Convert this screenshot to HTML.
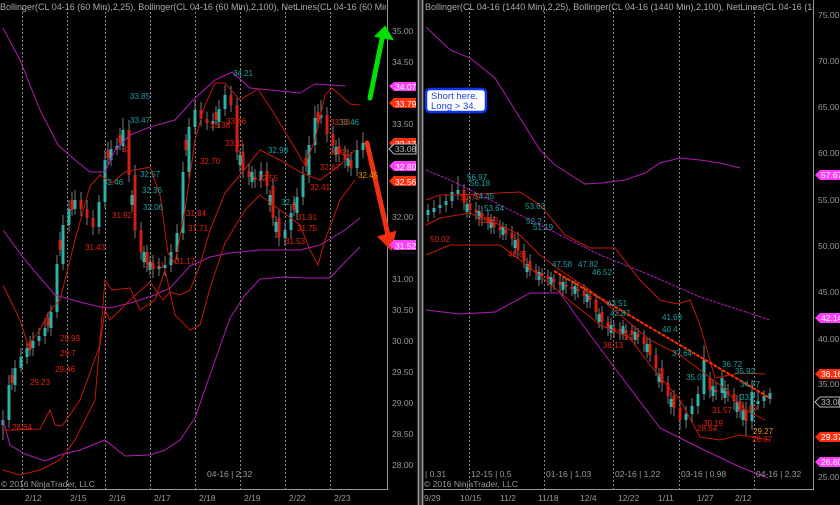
<!DOCTYPE html>
<html><head><meta charset="utf-8"><style>
html,body{margin:0;padding:0;background:#000;width:840px;height:505px;overflow:hidden}
svg{display:block;font-family:"Liberation Sans",sans-serif}
</style></head><body>
<svg width="840" height="505" viewBox="0 0 840 505" xmlns="http://www.w3.org/2000/svg">
<defs><clipPath id="cl"><rect x="0" y="0" width="386" height="20"/></clipPath><clipPath id="cr"><rect x="424" y="0" width="389" height="20"/></clipPath></defs>
<rect width="840" height="505" fill="#000"/>
<rect x="417" y="0" width="7" height="505" fill="#3a3a3a"/>
<line x1="418.5" y1="0" x2="418.5" y2="505" stroke="#9a9a9a"/>
<line x1="422.5" y1="0" x2="422.5" y2="505" stroke="#9a9a9a"/>
<g stroke="#888" stroke-dasharray="2,2" stroke-width="1">
<line x1="22.5" y1="8" x2="22.5" y2="489"/><line x1="67.5" y1="8" x2="67.5" y2="489"/><line x1="105.5" y1="8" x2="105.5" y2="489"/><line x1="150.5" y1="8" x2="150.5" y2="489"/><line x1="195.5" y1="8" x2="195.5" y2="489"/><line x1="240.5" y1="8" x2="240.5" y2="489"/><line x1="285.5" y1="8" x2="285.5" y2="489"/><line x1="330.5" y1="8" x2="330.5" y2="489"/>
<line x1="469.5" y1="8" x2="469.5" y2="489"/><line x1="544.5" y1="8" x2="544.5" y2="489"/><line x1="613.5" y1="8" x2="613.5" y2="489"/><line x1="679.5" y1="8" x2="679.5" y2="489"/><line x1="754.5" y1="8" x2="754.5" y2="489"/>
</g>
<g stroke="#999" fill="none"><path d="M387.5 0V489.5H0"/><path d="M813.5 0V489.5H424"/></g>
<!-- candles -->
<g stroke="#7a7a7a" stroke-width="1" fill="none">
<path d="M3 410V440 M9 375V428 M12 368V390 M15 360V392 M21 348V372 M27 340V364 M30 336V356 M33 332V356 M39 328V346 M45 318V344 M48 312V332 M51 305V336 M57 255V318 M60 232V256 M63 215V270 M69 200V232 M72 192V216 M75 190V215 M81 192V216 M87 200V225 M93 210V235 M99 195V234 M105 150V208 M108 142V165 M111 140V166 M117 138V155 M120 128V150 M123 118V152 M129 120V182 M132 190V212 M135 165V238 M141 222V260 M144 246V268 M147 245V272 M150 256V275 M153 255V278 M159 258V276 M165 256V276 M171 244V272 M177 224V260 M183 162V240 M186 134V156 M189 118V178 M195 100V134 M201 102V126 M207 112V130 M213 113V131 M216 106V125 M219 100V128 M225 85V116 M231 86V112 M237 98V160 M240 150V172 M243 144V178 M249 163V185 M252 166V188 M255 169V188 M261 162V188 M267 162V194 M270 190V212 M273 178V226 M276 216V238 M279 210V246 M285 222V246 M291 205V238 M294 196V216 M297 188V220 M303 166V205 M306 150V172 M309 136V183 M315 106V153 M318 104V128 M321 100V124 M327 107V142 M333 126V154 M336 140V162 M339 138V162 M345 146V168 M348 150V172 M351 152V176 M357 140V176 M363 132V158"/>
<path d="M428 204V222 M434 200V218 M440 196V214 M446 194V212 M452 184V208 M458 176V200 M464 184V210 M467 198V218 M470 196V216 M476 202V220 M479 205V226 M482 206V226 M488 210V230 M491 214V234 M494 216V234 M500 220V238 M503 222V240 M506 224V240 M512 226V246 M515 234V254 M518 232V258 M524 244V268 M527 258V278 M530 254V276 M536 264V280 M539 266V286 M542 268V284 M548 270V286 M551 272V292 M554 274V290 M560 276V292 M563 276V296 M566 278V294 M572 280V296 M575 280V300 M578 282V298 M584 284V304 M587 288V308 M590 290V308 M596 294V320 M599 308V328 M602 306V330 M608 316V336 M611 318V340 M614 322V338 M620 322V340 M623 320V340 M626 324V340 M632 324V342 M635 326V346 M638 328V344 M644 330V352 M647 338V358 M650 338V362 M656 348V376 M659 368V388 M662 360V392 M668 376V404 M671 392V414 M674 390V416 M680 400V430 M686 406V428 M692 398V422 M698 386V414 M704 345V400 M710 372V398 M713 380V402 M716 382V400 M722 370V400 M725 380V404 M728 384V402 M734 388V410 M737 395V418 M740 394V418 M743 402V426 M746 402V436 M752 380V430 M758 392V410 M764 390V408 M770 388V404"/>
</g>
<g stroke="#2fb0a8" stroke-width="3" fill="none">
<path d="M3 425V420 M9 420V385 M15 385V368 M21 368V357 M27 357V348 M33 348V341 M39 341V336 M45 336V328 M51 328V312 M57 312V264 M63 264V225 M69 225V209 M75 209V200 M99 227V202 M105 202V160 M111 160V149 M117 149V146 M123 146V130 M159 269V266 M165 268V265 M171 265V252 M177 252V233 M183 233V172 M189 172V127 M195 127V110 M213 124V121 M219 122V109 M225 109V95 M261 180V171 M285 238V230 M291 230V213 M297 213V197 M303 197V175 M309 175V145 M315 145V118 M321 118V115 M357 168V150 M363 150V143 M132 205V195 M144 262V252 M150 270V262 M240 165V155 M252 182V172 M270 205V195 M276 232V222 M336 155V147 M348 166V158"/>
<path d="M428 215V210 M434 212V208 M440 208V205 M446 205V201 M452 201V192 M458 194V190 M686 420V414 M692 414V406 M698 406V394 M704 394V360 M722 393V378 M752 421V392 M758 404V401 M764 401V396 M770 399V393 M467 212V204 M479 219V211 M491 228V220 M503 235V227 M515 248V240 M527 272V264 M539 280V272 M551 285V277 M563 290V282 M575 294V286 M587 302V294 M599 322V314 M611 333V325 M623 334V326 M635 340V332 M647 352V344 M659 382V374 M671 407V399 M713 396V386 M725 398V388 M737 412V402 M743 420V410"/>
</g>
<g stroke="#d02010" stroke-width="3" fill="none">
<path d="M81 200V209 M87 209V218 M93 218V227 M129 130V175 M135 175V230 M141 230V252 M147 252V263 M153 263V269 M201 110V119 M207 119V123 M231 95V105 M237 105V152 M243 152V171 M249 171V177 M255 177V180 M267 171V186 M273 186V218 M279 218V238 M327 115V134 M333 134V146 M339 146V154 M345 154V160 M351 160V168 M12 375V383 M30 342V350 M48 318V326 M60 240V250 M72 200V210 M108 150V158 M120 135V143 M186 140V150 M216 112V120 M294 202V210 M306 158V166 M318 112V122"/>
<path d="M464 190V203 M470 203V210 M476 210V213 M482 213V217 M488 217V223 M494 223V227 M500 227V230 M506 230V233 M512 233V239 M518 239V251 M524 251V261 M530 261V270 M536 270V273 M542 273V276 M548 276V279 M554 279V282 M560 282V285 M566 285V287 M572 287V289 M578 289V291 M584 291V296 M590 296V300 M596 300V312 M602 312V322 M608 322V328 M614 328V331 M620 329V332 M626 330V333 M632 330V334 M638 334V337 M644 337V344 M650 344V355 M656 355V368 M662 368V383 M668 383V396 M674 396V408 M680 408V420 M710 378V390 M716 390V392 M728 391V394 M734 394V401 M740 401V410 M746 410V421"/>
</g>
<g fill="none" stroke-width="1">
<path stroke="#b01cb0" d="M3 28 L20 60 L40 110 L58 145 L75 160 L90 172 L105 172 L115 150 L130 135 L150 127 L175 120 L195 98 L215 80 L232 72 L250 88 L280 91 L300 93 L315 84 L330 85 L345 86"/>
<path stroke="#b01cb0" d="M3 230 L25 260 L55 295 L80 302 L100 307 L110 308 L130 303 L155 295 L170 288 L190 266 L210 257 L230 253 L260 250 L300 250 L320 245 L345 230 L360 218"/>
<path stroke="#b01cb0" d="M3 420 L10 445 L25 454 L45 461 L60 455 L80 450 L105 440 L125 456 L150 455 L165 450 L180 440 L195 418 L210 375 L230 318 L245 295 L260 279 L285 277 L305 278 L330 278 L345 262 L360 247"/>
<path stroke="#c21a0a" d="M3 285 L20 320 L28 345 L40 330 L48 313 L60 300 L75 240 L90 186 L100 175 L112 183 L125 172 L150 167 L160 195 L168 253 L175 263 L185 210 L195 140 L205 105 L215 83 L225 83 L240 100 L258 89 L275 115 L290 140 L305 165 L315 140 L325 95 L332 88 L340 95 L350 104 L360 105"/>
<path stroke="#c21a0a" d="M3 430 L15 430 L40 429 L50 410 L55 425 L62 426 L80 400 L100 345 L105 310 L110 320 L130 300 L150 282 L163 300 L170 292 L180 295 L190 290 L200 265 L210 230 L225 193 L240 175 L260 150 L280 160 L300 172 L320 180 L340 165 L355 150"/>
<path stroke="#c21a0a" d="M3 470 L20 475 L40 470 L60 460 L75 440 L95 400 L105 280 L112 290 L130 288 L140 310 L155 300 L165 270 L175 315 L190 330 L200 325 L210 288 L225 243 L245 210 L260 195 L280 210 L300 225 L310 250 L318 265 L325 240 L340 200 L355 180"/>
<path stroke="#b01cb0" d="M426 27 L450 50 L470 58 L495 78 L515 110 L540 150 L555 165 L585 184 L602 183 L625 180 L645 173 L660 163 L680 158 L700 160 L720 163 L740 168"/>
<path stroke="#b01cb0" stroke-dasharray="3,1" d="M426 170 L450 180 L490 200 L520 215 L560 235 L600 255 L650 275 L700 297 L740 310 L770 320"/>
<path stroke="#b01cb0" d="M426 310 L460 314 L495 312 L530 293 L560 293 L585 328 L620 375 L660 428 L700 448 L740 467 L768 478"/>
<path stroke="#c21a0a" d="M426 200 L440 195 L460 195 L520 192 L540 205 L565 235 L590 248 L615 248 L640 280 L660 300 L678 304 L690 300 L700 325 L715 378 L740 373 L765 374"/>
<path stroke="#c21a0a" d="M426 225 L440 218 L470 213 L500 225 L520 235 L540 255 L560 270 L590 290 L620 315 L650 340 L680 355 L720 385 L745 410 L765 420"/>
<path stroke="#c21a0a" d="M426 255 L450 245 L475 245 L500 245 L520 260 L545 280 L575 305 L600 325 L630 338 L650 365 L680 400 L700 437 L720 440 L740 435 L770 440"/>
<path stroke="#ff3000" stroke-width="2" stroke-dasharray="4,1" d="M554 271 L770 398"/>
</g>
<path d="M370 98 L383 34" stroke="#00e000" stroke-width="5" stroke-linecap="round"/><path d="M376 36 L385 27 L392 39 Z" fill="#00e000" stroke="#00e000" stroke-width="2"/>
<path d="M367 143 L388 235" stroke="#f03010" stroke-width="5" stroke-linecap="round"/><path d="M379 237 L391 249 L395 232 Z" fill="#f03010" stroke="#f03010" stroke-width="2"/>
<rect x="426" y="89" width="60" height="23" rx="4" fill="#fff" stroke="#1034f0" stroke-width="2.5"/>
<text x="431" y="99" font-size="9.5" fill="#2040e0">Short here.</text><text x="431" y="109" font-size="9.5" fill="#2040e0">Long &gt; 34.</text>
<g font-size="9" fill="#aaa">
<text x="0" y="10" clip-path="url(#cl)">Bollinger(CL 04-16 (60 Min),2,25), Bollinger(CL 04-16 (60 Min),2,100), NetLines(CL 04-16 (60 Min),3,5,Color [Lime],Colo</text>
<text x="425" y="10" clip-path="url(#cr)">Bollinger(CL 04-16 (1440 Min),2,25), Bollinger(CL 04-16 (1440 Min),2,100), NetLines(CL 04-16 (1440 Min),3,5,Color [Lim</text>
</g>
<g font-size="8.5" fill="#999">
<text x="392" y="34">35.00</text><text x="392" y="65">34.50</text><text x="392" y="127">33.50</text><text x="392" y="220">32.00</text><text x="392" y="282">31.00</text><text x="392" y="313">30.50</text><text x="392" y="344">30.00</text><text x="392" y="375">29.50</text><text x="392" y="406">29.00</text><text x="392" y="437">28.50</text><text x="392" y="468">28.00</text>
<text x="818" y="18">75.00</text><text x="818" y="64">70.00</text><text x="818" y="110">65.00</text><text x="818" y="156">60.00</text><text x="818" y="203">55.00</text><text x="818" y="249">50.00</text><text x="818" y="295">45.00</text><text x="818" y="342">40.00</text><text x="818" y="387">35.00</text><text x="818" y="480">25.00</text>
<text x="25" y="501">2/12</text><text x="70" y="501">2/15</text><text x="109" y="501">2/16</text><text x="154" y="501">2/17</text><text x="199" y="501">2/18</text><text x="244" y="501">2/19</text><text x="289" y="501">2/22</text><text x="334" y="501">2/23</text>
<text x="424" y="501">9/29</text><text x="460" y="501">10/15</text><text x="500" y="501">11/2</text><text x="538" y="501">11/18</text><text x="580" y="501">12/4</text><text x="618" y="501">12/22</text><text x="658" y="501">1/11</text><text x="697" y="501">1/27</text><text x="735" y="501">2/12</text>
<text x="207" y="477">04-16 | 2.32</text>
<text x="425" y="477">| 0.31</text><text x="471" y="477">12-15 | 0.5</text><text x="546" y="477">01-16 | 1.03</text><text x="615" y="477">02-16 | 1.22</text><text x="681" y="477">03-16 | 0.98</text><text x="756" y="477">04-16 | 2.32</text>
<text x="1" y="487">© 2016 NinjaTrader, LLC</text><text x="424" y="487">© 2016 NinjaTrader, LLC</text>
</g>
<g font-size="8.5" fill="#fff">
<path d="M389 86 L394 82 H416 V91 H394 Z" fill="#ff40ff"/><text x="395" y="90">34.07</text>
<path d="M389 103 L394 98 H416 V108 H394 Z" fill="#ff3010"/><text x="395" y="107">33.79</text>
<path d="M389 143 L394 138 H416 V148 H394 Z" fill="#ff3010"/><text x="395" y="147">33.17</text>
<path d="M389 149 L394 144 H416 V154 H394 Z" fill="#000" stroke="#bbb"/><text x="395" y="152" fill="#bbb">33.08</text>
<path d="M389 166 L394 161 H416 V171 H394 Z" fill="#ff40ff"/><text x="395" y="170">32.80</text>
<path d="M389 181 L394 176 H416 V186 H394 Z" fill="#ff3010"/><text x="395" y="185">32.56</text>
<path d="M389 245 L394 240 H416 V250 H394 Z" fill="#ff40ff"/><text x="395" y="249">31.52</text>
<path d="M815 175 L820 170 H840 V180 H820 Z" fill="#ff40ff"/><text x="821" y="178">57.67</text>
<path d="M815 318 L820 313 H840 V323 H820 Z" fill="#ff40ff"/><text x="821" y="321">42.14</text>
<path d="M815 374 L820 369 H840 V379 H820 Z" fill="#ff3010"/><text x="821" y="377">36.16</text>
<path d="M815 402 L820 397 H840 V407 H820 Z" fill="#000" stroke="#bbb"/><text x="821" y="405" fill="#bbb">33.08</text>
<path d="M815 437 L820 432 H840 V442 H820 Z" fill="#ff3010"/><text x="821" y="440">29.37</text>
<path d="M815 462 L820 457 H840 V467 H820 Z" fill="#ff40ff"/><text x="821" y="465">26.60</text>
</g>
<g font-size="8" fill="#1aa0a0">
<text x="233" y="76">34.21</text><text x="130" y="99">33.85</text><text x="130" y="123">33.47</text><text x="339" y="125">33.46</text><text x="268" y="153">32.98</text><text x="140" y="177">32.57</text><text x="103" y="185">32.46</text><text x="142" y="193">32.36</text><text x="143" y="210">32.06</text><text x="281" y="205">32.1</text>
<text x="467" y="180">56.97</text><text x="470" y="186">56.18</text><text x="474" y="199">54.45</text><text x="484" y="211">53.64</text><text x="525" y="209">53.63</text><text x="526" y="224">52.2</text><text x="533" y="230">51.19</text><text x="552" y="267">47.58</text><text x="578" y="267">47.82</text><text x="592" y="275">46.52</text><text x="607" y="306">43.51</text><text x="610" y="316">42.87</text><text x="662" y="320">41.69</text><text x="662" y="332">40.4</text><text x="672" y="356">37.64</text><text x="686" y="380">35.07</text><text x="722" y="367">36.72</text><text x="735" y="374">35.92</text><text x="740" y="387">34.77</text><text x="740" y="400">33.7</text>
</g>
<g font-size="8" fill="#e8200a">
<text x="122" y="152">33</text><text x="226" y="124">33.46</text><text x="210" y="128">33.38</text><text x="225" y="146">33.11</text><text x="200" y="164">32.70</text><text x="258" y="181">32.55</text><text x="330" y="125">33.33</text><text x="329" y="155">32.95</text><text x="320" y="170">32.67</text><text x="310" y="190">32.41</text><text x="112" y="218">31.92</text><text x="186" y="216">31.84</text><text x="188" y="231">31.71</text><text x="297" y="220">31.91</text><text x="297" y="231">31.75</text><text x="285" y="244">31.53</text><text x="85" y="250">31.43</text><text x="175" y="264">31.17</text><text x="145" y="268">31.11</text><text x="60" y="341">29.93</text><text x="60" y="356">29.7</text><text x="55" y="372">29.46</text><text x="30" y="385">29.23</text><text x="12" y="430">28.64</text>
<text x="460" y="200">53.75</text><text x="478" y="223">51.99</text><text x="430" y="242">50.02</text><text x="508" y="257">48.6</text><text x="624" y="340">39.7</text><text x="603" y="348">38.13</text><text x="712" y="413">31.57</text><text x="737" y="411">31.89</text><text x="703" y="426">30.19</text><text x="697" y="431">28.64</text><text x="752" y="442">28.37</text>
</g>
<g font-size="8" fill="#f09010"><text x="358" y="178">32.45</text><text x="753" y="434">29.27</text></g>
</svg>
</body></html>
